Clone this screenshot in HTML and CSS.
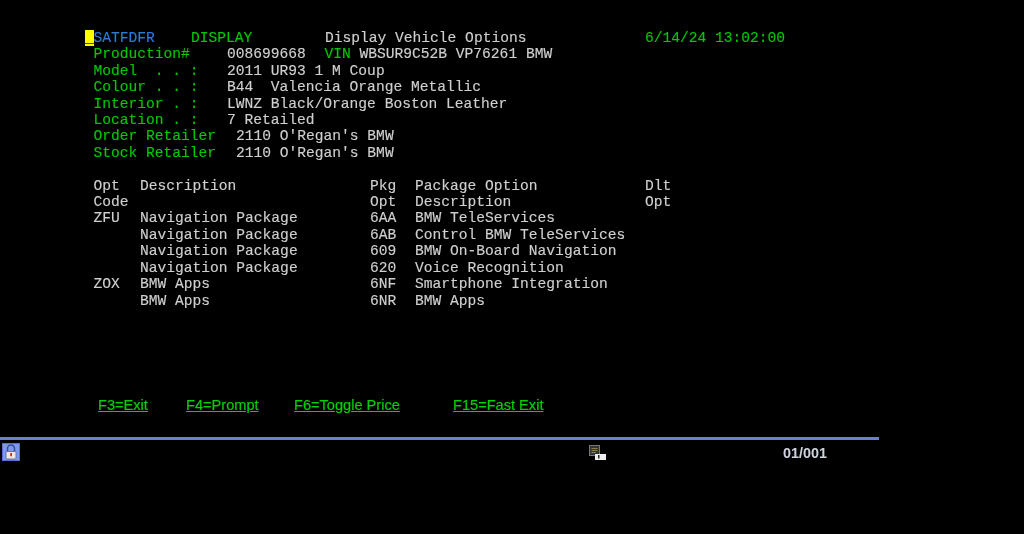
FILE: index.html
```html
<!DOCTYPE html>
<html lang="en">
<head>
<meta charset="utf-8">
<title>Display Vehicle Options</title>
<link rel="stylesheet" href="styles.css">
</head>
<body>
<main class="screen">
  <section class="terminal">
    <div class="row">
      <span class="cursor"></span>
      <span class="f-prog blue">SATFDFR</span>
      <span class="f-mode green">DISPLAY</span>
      <span class="f-title">Display Vehicle Options</span>
      <span class="green">6/14/24 13:02:00</span>
    </div>
    <div class="row indent"><span class="f-label green">Production#</span><span class="f-prod">008699668</span><span class="f-vin green">VIN</span><span>WBSUR9C52B VP76261 BMW</span></div>
    <div class="row indent"><span class="f-label green">Model  . . :</span><span>2011 UR93 1 M Coup</span></div>
    <div class="row indent"><span class="f-label green">Colour . . :</span><span>B44  Valencia Orange Metallic</span></div>
    <div class="row indent"><span class="f-label green">Interior . :</span><span>LWNZ Black/Orange Boston Leather</span></div>
    <div class="row indent"><span class="f-label green">Location . :</span><span>7 Retailed</span></div>
    <div class="row indent"><span class="f-retailer green">Order Retailer</span><span>2110 O'Regan's BMW</span></div>
    <div class="row indent"><span class="f-retailer green">Stock Retailer</span><span>2110 O'Regan's BMW</span></div>
    <div class="row"></div>
    <div class="row indent"><span class="c-code">Opt</span><span class="c-desc">Description</span><span class="c-pkg">Pkg</span><span class="c-opt">Package Option</span><span>Dlt</span></div>
    <div class="row indent"><span class="c-code">Code</span><span class="c-desc"></span><span class="c-pkg">Opt</span><span class="c-opt">Description</span><span>Opt</span></div>
    <div class="row indent"><span class="c-code">ZFU</span><span class="c-desc">Navigation Package</span><span class="c-pkg">6AA</span><span class="c-opt">BMW TeleServices</span></div>
    <div class="row indent"><span class="c-code"></span><span class="c-desc">Navigation Package</span><span class="c-pkg">6AB</span><span class="c-opt">Control BMW TeleServices</span></div>
    <div class="row indent"><span class="c-code"></span><span class="c-desc">Navigation Package</span><span class="c-pkg">609</span><span class="c-opt">BMW On-Board Navigation</span></div>
    <div class="row indent"><span class="c-code"></span><span class="c-desc">Navigation Package</span><span class="c-pkg">620</span><span class="c-opt">Voice Recognition</span></div>
    <div class="row indent"><span class="c-code">ZOX</span><span class="c-desc">BMW Apps</span><span class="c-pkg">6NF</span><span class="c-opt">Smartphone Integration</span></div>
    <div class="row indent"><span class="c-code"></span><span class="c-desc">BMW Apps</span><span class="c-pkg">6NR</span><span class="c-opt">BMW Apps</span></div>
  </section>
  <nav class="keys">
    <a class="key k1">F3=Exit</a>
    <a class="key k2">F4=Prompt</a>
    <a class="key k3">F6=Toggle Price</a>
    <a class="key">F15=Fast Exit</a>
  </nav>
  <footer class="status">
    <svg class="lock" width="18" height="18" viewBox="0 0 18 18" aria-hidden="true">
      <rect width="18" height="18" fill="#7d98ee"/>
      <rect x="0.5" y="0.5" width="17" height="17" fill="none" stroke="#5a6fd0"/>
      <path d="M5.5 9V5.5a3.5 3.5 0 0 1 7 0V9" fill="none" stroke="#3c4a9a" stroke-width="1.5"/>
      <rect x="4" y="8.5" width="10" height="7.5" rx="1" fill="#ece8e0" stroke="#55608f" stroke-width="0.8"/>
      <rect x="8.2" y="10" width="1.8" height="3.2" fill="#e02a20"/>
    </svg>
    <svg class="msg" width="17" height="15" viewBox="0 0 17 15" aria-hidden="true">
      <rect x="0.5" y="0.5" width="10" height="10" fill="#333" stroke="#777"/>
      <path d="M2.5 3.5h6M2.5 5.5h6" stroke="#8f7d50" stroke-width="1"/>
      <path d="M2.5 7.5h4" stroke="#888" stroke-width="1"/>
      <rect x="6" y="9" width="11" height="6" fill="#eee"/>
      <rect x="9" y="10" width="1.5" height="3.5" fill="#222"/>
    </svg>
    <span class="pos">01/001</span>
  </footer>
</main>
</body>
</html>
```
FILE: styles.css
```css
html, body {
  margin: 0;
  height: 100%;
  background: #000;
}
.screen {
  width: 1024px;
  height: 534px;
  overflow: hidden;
  background: #000;
  display: flex;
  flex-direction: column;
}
.terminal {
  padding: 30px 0 0 85px;
  font: 14.6px/16.42px "Liberation Mono", monospace;
  color: #cfcfcf;
  -webkit-text-stroke: 0.15px currentColor;
  filter: blur(0.35px);
  height: 295px;
}
.row {
  display: flex;
  height: 16.42px;
  white-space: pre;
}
.indent { padding-left: 8.5px; }
.green { color: #00c800; }
.blue { color: #2f78d8; }
.cursor {
  width: 8.5px;
  height: 16px;
  background: linear-gradient(#ffff00 0 13px, #e01010 13px 14px, #ffff00 14px);
}
.f-prog { width: 97.5px; }
.f-mode { width: 134px; }
.f-title { width: 320px; }
.f-label { width: 133.5px; }
.f-prod { width: 97.5px; }
.f-vin { width: 35px; }
.f-retailer { width: 142.5px; }
.c-code { width: 46.5px; }
.c-desc { width: 230px; }
.c-pkg { width: 45px; }
.c-opt { width: 230px; }
.keys {
  display: flex;
  padding: 71px 0 0 98px;
  font: 14.6px/18px "Liberation Sans", sans-serif;
  color: #00d000;
  -webkit-text-stroke: 0.2px currentColor;
  filter: blur(0.25px);
}
.key { text-decoration: underline; }
.k1 { width: 88px; }
.k2 { width: 108px; }
.k3 { width: 159px; }
.status {
  margin-top: 23px;
  width: 879px;
  box-sizing: border-box;
  border-top: 3px solid #6a7fdc;
  display: flex;
  align-items: flex-start;
  padding: 3px 0 0 2px;
}
.lock { display: block; }
.msg { display: block; margin: 2px 0 0 569px; }
.pos {
  margin-left: 177px;
  font: bold 14.4px/20px "Liberation Sans", sans-serif;
  color: #cdd2dc;
  filter: blur(0.25px);
}
```
